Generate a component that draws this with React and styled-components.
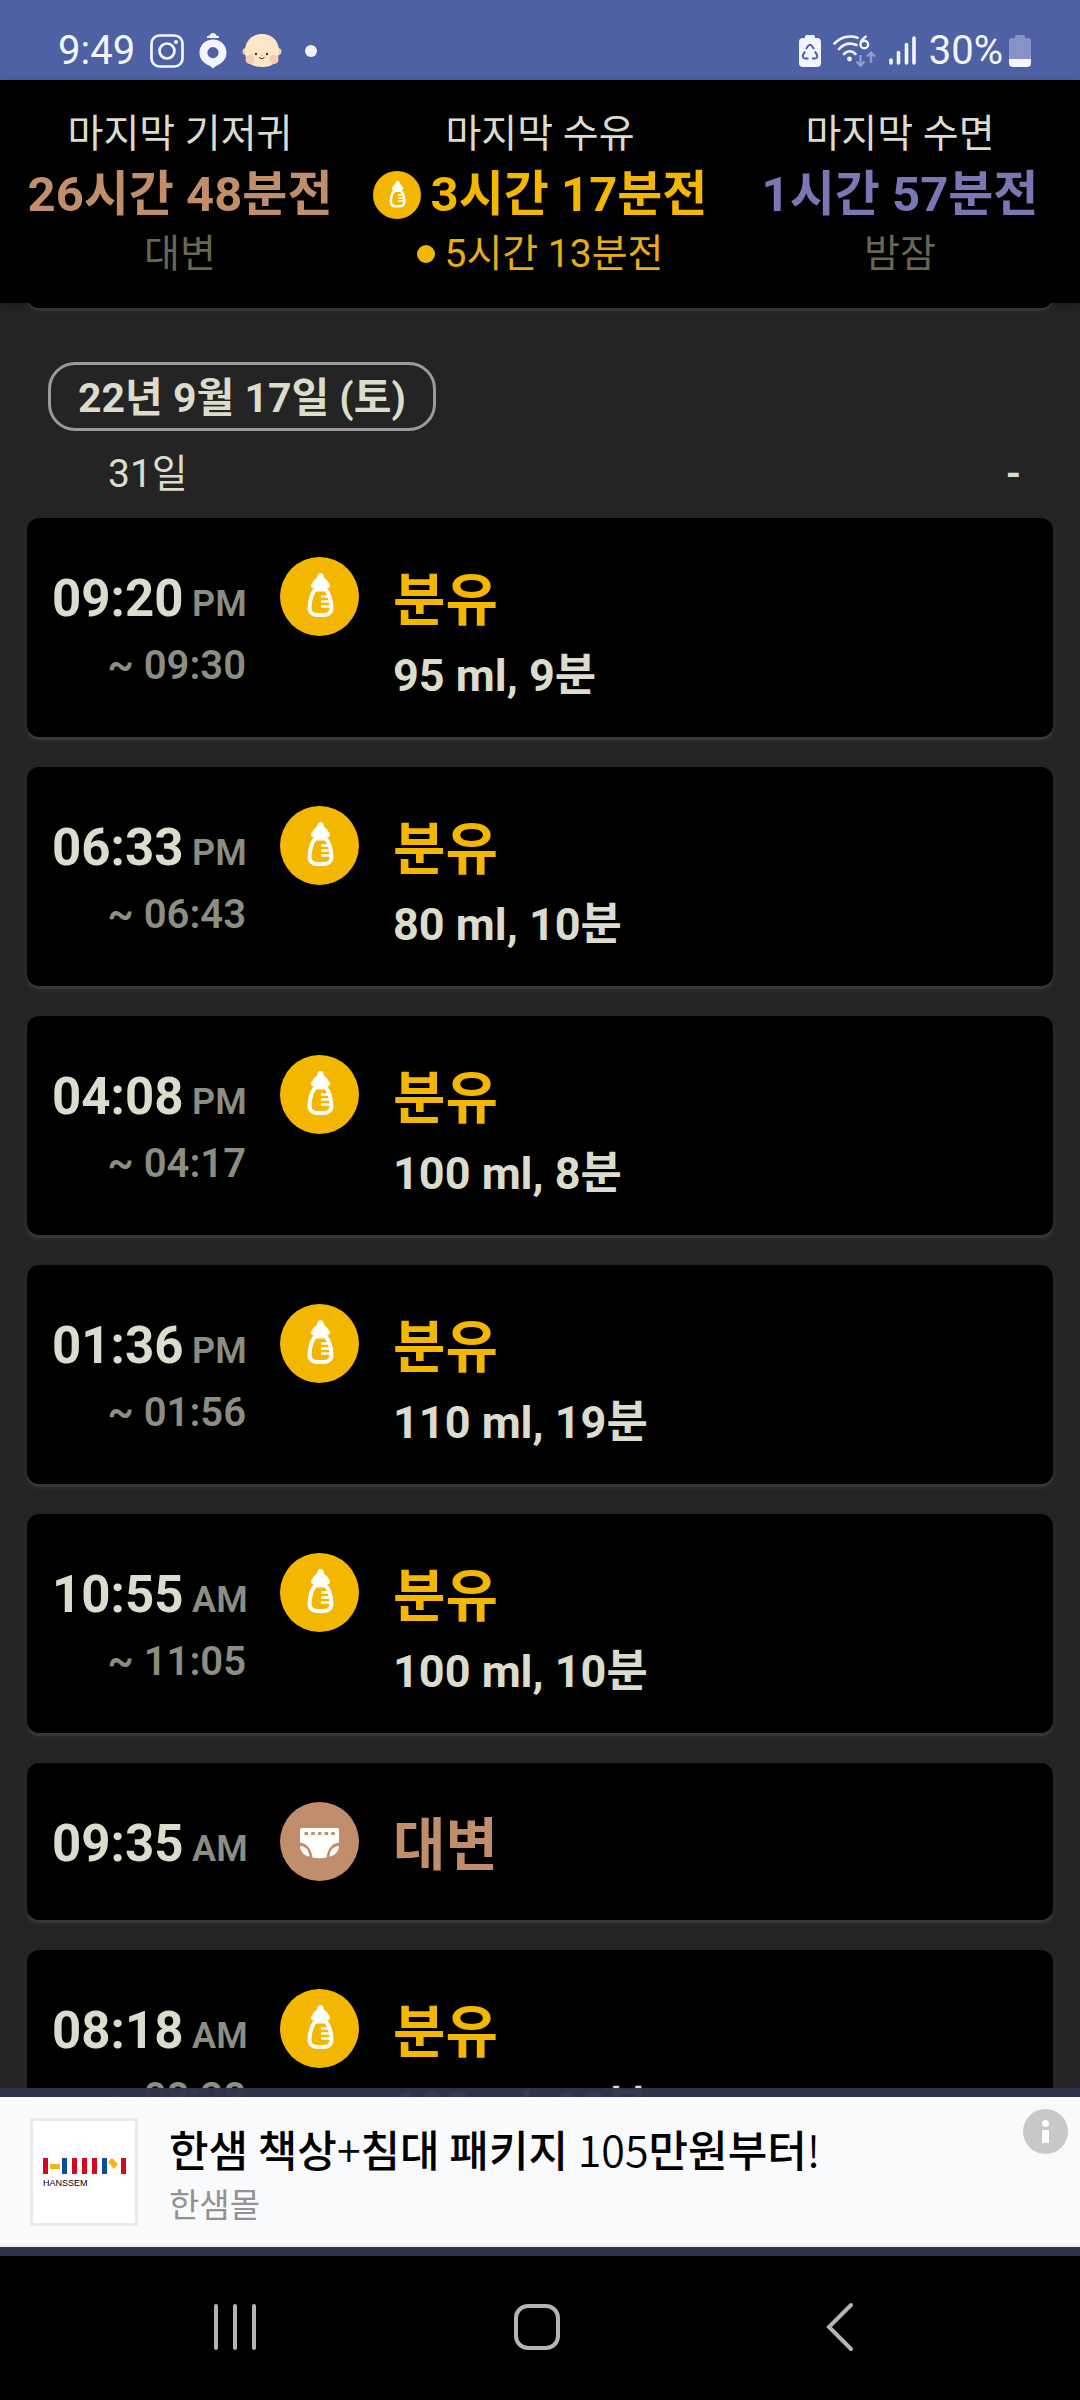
import React from "react";
import styled, { createGlobalStyle } from "styled-components";

const GOLD = "#f3b700";
const TAN = "#c08e6a";
const VIOLET = "#7a77b5";
const CREAM = "#dbdccc";
const MUTED = "#8b8e80";

const records = [
  { time: "09:20", period: "PM", end: "09:30", kind: "formula", detail: "95 ml, 9분" },
  { time: "06:33", period: "PM", end: "06:43", kind: "formula", detail: "80 ml, 10분" },
  { time: "04:08", period: "PM", end: "04:17", kind: "formula", detail: "100 ml, 8분" },
  { time: "01:36", period: "PM", end: "01:56", kind: "formula", detail: "110 ml, 19분" },
  { time: "10:55", period: "AM", end: "11:05", kind: "formula", detail: "100 ml, 10분" },
  { time: "09:35", period: "AM", kind: "stool" },
  { time: "08:18", period: "AM", end: "08:28", kind: "formula", detail: "100 ml, 10분" },
];

const kinds = {
  formula: { label: "분유", color: GOLD },
  stool: { label: "대변", color: TAN },
};

const BottleIcon = ({ size }) => (
  <svg width={size} height={size} viewBox="0 0 79 79" aria-hidden="true">
    <circle cx="39.5" cy="39.5" r="39.5" fill={GOLD} />
    <path
      d="M40.500 16c-2 0-3.200 1.300-3.200 3.200 0 2.300-4.800 4.200-4.800 6.800-2 .8-2.300 4.800.5 5.200h15c2.800-.4 2.500-4.400.5-5.200 0-2.600-4.800-4.500-4.800-6.800 0-1.900-1.200-3.200-3.200-3.200z"
      fill="#fff"
    />
    <path
      d="M35.500 32.500h10c3.500 3 6 11.500 6 18.500 0 4.500-3.500 7-8 7h-6c-4.500 0-8-2.500-8-7 0-7 2.500-15.500 6-18.500z"
      fill="none"
      stroke="#fff"
      strokeWidth="4"
      strokeLinejoin="round"
    />
    <path d="M41 39.500h8M41 44.500h9M41 49.500h9" stroke="#fff" strokeWidth="2.600" />
  </svg>
);

const DiaperIcon = ({ size }) => (
  <svg width={size} height={size} viewBox="0 0 79 79" aria-hidden="true">
    <circle cx="39.500" cy="39.500" r="39.500" fill={TAN} />
    <path
      d="M22 26h35q2 0 2 2v12.500c-6 .5-11 5-12.500 15q-7 1.500-14 0c-1.500-10-6.500-14.500-12.500-15V28q0-2 2-2z"
      fill="#fff"
    />
    <path d="M20 44c6 .5 9 4 9.500 10.500-5-.5-9-4.500-9.500-10.500zM59 44c-6 .5-9 4-9.500 10.500 5-.5 9-4.500 9.500-10.500z" fill="#fff" />
    <path d="M24.500 31.500h32" stroke={TAN} strokeWidth="3" strokeDasharray="3.500 3.200" />
  </svg>
);

const InstagramIcon = () => (
  <svg width="34" height="34" viewBox="0 0 34 34" fill="none" stroke="#f3f4fc" strokeWidth="2.700" aria-hidden="true">
    <rect x="1.500" y="1.500" width="31" height="31" rx="8" />
    <circle cx="17" cy="17" r="7.500" />
    <circle cx="26" cy="8" r="2" fill="#f3f4fc" stroke="none" />
  </svg>
);

const RingIcon = () => (
  <svg width="28" height="36" viewBox="0 0 28 36" fill="#f3f4fc" aria-hidden="true">
    <path d="M14 0c2 0 3 1 3.200 2.500 2-.3 3.300.8 2.800 2.500H8c-.5-1.700.8-2.800 2.800-2.500C11 1 12 0 14 0z" />
    <path
      fillRule="evenodd"
      d="M14 6.500c7.700 0 13.500 5.800 13.500 13 0 6-3.500 10-8.500 12.500-2 1-3.500 1.800-5 3.500-1.500-1.700-3-2.500-5-3.500C4 29.500.5 25.500.5 19.500c0-7.200 5.800-13 13.500-13zm0 7.500a5.600 5.600 0 100 11.200 5.600 5.600 0 000-11.200z"
    />
  </svg>
);

const BabyIcon = () => (
  <svg width="40" height="34" viewBox="0 0 40 34" aria-hidden="true">
    <circle cx="4" cy="17.500" r="3.500" fill="#f5cfa0" />
    <circle cx="36" cy="17.500" r="3.500" fill="#f5cfa0" />
    <path d="M20 0c10 0 17 7 17 17 0 10-5 16-17 16S3 27 3 17C3 7 10 0 20 0z" fill="#fee6c6" />
    <circle cx="8" cy="25.500" r="4.500" fill="#fbc9b4" />
    <circle cx="32" cy="25.500" r="4.500" fill="#fbc9b4" />
    <circle cx="14" cy="20" r="1.200" fill="#4a3728" />
    <circle cx="25" cy="20" r="1.200" fill="#4a3728" />
    <path d="M17 23.500q3 2.500 5.500 0" fill="none" stroke="#4a3728" />
    <path d="M19 21.500h1.500" stroke="#d9a87c" />
  </svg>
);

const BatterySaverIcon = () => (
  <svg width="22" height="32" viewBox="0 0 22 32" aria-hidden="true">
    <path d="M6 3V1.500Q6 0 7.500 0h7Q16 0 16 1.500V3h2q4 0 4 4v21q0 4-4 4H4q-4 0-4-4V7q0-4 4-4z" fill="#f3f4fc" />
    <g fill="none" stroke="#4e61a5" strokeWidth="2">
      <path d="M7 14l2-3q2-2.500 4 0l2 3" />
      <path d="M16 16.500l2 3.500q1 3-2 3.500h-3" />
      <path d="M9.500 23.500H6q-3-.5-2-3.500l2-3.500" />
    </g>
  </svg>
);

const WifiIcon = () => (
  <svg width="44" height="32" viewBox="0 0 44 32" fill="none" stroke="#f3f4fc" aria-hidden="true">
    <g strokeWidth="2.600" strokeLinecap="round">
      <path d="M1.500 8.500C8 1.500 17 .2 24.500 2.800" />
      <path d="M6 14c5-5.500 11.500-6.500 17.500-4" />
      <path d="M11 19c3.500-3.500 8-3.500 11.500 0" />
    </g>
    <circle cx="16.500" cy="24" r="2.400" fill="#f3f4fc" stroke="none" />
    <path d="M33.500 1C29 4 27.500 7 27.500 9.500a3.800 3.800 0 103.800-3.800q-2 0-3 1.500" strokeWidth="2.400" />
    <path d="M27.500 20v10.500M23.500 26.500l4 4 4-4M38 28V17.500M34 21.500l4-4 4 4" stroke="#919dc9" strokeWidth="2.400" />
  </svg>
);

const SignalIcon = () => (
  <svg width="28" height="32" viewBox="0 0 28 32" stroke="#f3f4fc" strokeWidth="3.600" strokeLinecap="round" aria-hidden="true">
    <path d="M2 25v3M9.500 17.500V28M17.500 9.500V28M25 3v25" />
  </svg>
);

const BatteryIcon = () => (
  <svg width="22" height="32" viewBox="0 0 22 32" aria-hidden="true">
    <path d="M6 3V1.500Q6 0 7.500 0h7Q16 0 16 1.500V3h3q3 0 3 3v18H0V6q0-3 3-3z" fill="#8793c4" />
    <path d="M0 24h22v4q0 4-4 4H4q-4 0-4-4z" fill="#f3f4fc" />
  </svg>
);

const HanssemLogo = () => (
  <svg width="84" height="16" viewBox="0 0 84 16" aria-hidden="true">
    <g fill="#d4081f">
      <path d="M0 0h5v16H0zM29 0h5v16h-5zM39 0h5v16h-5zM49 0h5v16h-5zM78 0h5v16h-5z" />
    </g>
    <path d="M19 0h5v16h-5zM59 0h5v16h-5z" fill="#0b4f9c" />
    <path d="M7 6h10v5H7zM65 4l4-4 6 6-4 5z" fill="#f4b316" />
  </svg>
);

const App = () => (
  <>
    <GlobalStyle />
    <Screen>
      <StatusBar>
        <StatusGroup $gap={15}>
          <StatusText>9:49</StatusText>
          <InstagramIcon />
          <RingIcon />
          <BabyIcon />
          <NoticeDot />
        </StatusGroup>
        <StatusGroup $gap={12}>
          <BatterySaverIcon />
          <WifiIcon />
          <SignalIcon />
          <BatteryLevel>
            <StatusText>30%</StatusText>
            <BatteryIcon />
          </BatteryLevel>
        </StatusGroup>
      </StatusBar>

      <Summary>
        <SummaryItem>
          <SummaryLabel>마지막 기저귀</SummaryLabel>
          <SummaryValue $color={TAN}>26시간 48분전</SummaryValue>
          <SummaryNote>대변</SummaryNote>
        </SummaryItem>
        <SummaryItem>
          <SummaryLabel>마지막 수유</SummaryLabel>
          <SummaryValue $color={GOLD}>
            <BottleIcon size={48} />
            3시간 17분전
          </SummaryValue>
          <SummaryNote $color="#e6ae12">
            <Dot />
            5시간 13분전
          </SummaryNote>
        </SummaryItem>
        <SummaryItem>
          <SummaryLabel>마지막 수면</SummaryLabel>
          <SummaryValue $color={VIOLET}>1시간 57분전</SummaryValue>
          <SummaryNote>밤잠</SummaryNote>
        </SummaryItem>
      </Summary>

      <Timeline>
        <ScrolledCard />
        <DayHeader>
          <DayBadge>22년 9월 17일 (토)</DayBadge>
          <DayInfo>
            <span>31일</span>
            <strong>-</strong>
          </DayInfo>
        </DayHeader>
        <RecordList>
          {records.map((record) => {
            const kind = kinds[record.kind];
            return (
              <Card key={record.time}>
                <TimeColumn>
                  <StartTime>
                    {record.time} <small>{record.period}</small>
                  </StartTime>
                  {record.end && <EndTime>~ {record.end}</EndTime>}
                </TimeColumn>
                {record.kind === "stool" ? <DiaperIcon size={79} /> : <BottleIcon size={79} />}
                <Description>
                  <Kind $color={kind.color}>{kind.label}</Kind>
                  {record.detail && <Detail>{record.detail}</Detail>}
                </Description>
              </Card>
            );
          })}
        </RecordList>
      </Timeline>

      <AdFrame>
        <AdBanner>
          <AdLink href="#hanssem">
            <AdThumb>
              <HanssemLogo />
              <span>HANSSEM</span>
            </AdThumb>
            <AdCopy>
              <AdTitle>
                한샘 책상<i>+</i>침대 패키지 <i>105</i>만원부터<i>!</i>
              </AdTitle>
              <AdSource>한샘몰</AdSource>
            </AdCopy>
          </AdLink>
          <InfoButton aria-label="광고 정보">
            <svg width="45" height="45" viewBox="0 0 45 45">
              <circle cx="22.500" cy="22.500" r="22.500" fill="#c7c8ca" />
              <circle cx="22.500" cy="14.500" r="3.500" fill="#fff" />
              <path d="M19 21h7v13h-7z" fill="#fff" />
            </svg>
          </InfoButton>
        </AdBanner>
      </AdFrame>

      <NavBar>
        <NavButton aria-label="최근 앱">
          <svg width="48" height="50" viewBox="0 0 48 50">
            <path d="M5 4v42M24 4v42M43 4v42" />
          </svg>
        </NavButton>
        <NavButton aria-label="홈">
          <svg width="48" height="50" viewBox="0 0 48 50">
            <rect x="3" y="4" width="42" height="42" rx="12" />
          </svg>
        </NavButton>
        <NavButton aria-label="뒤로">
          <svg width="48" height="50" viewBox="0 0 48 50">
            <path d="M35 3L13 25l22 22" />
          </svg>
        </NavButton>
      </NavBar>
    </Screen>
  </>
);

// Styled Components
const GlobalStyle = createGlobalStyle`
  * {
    box-sizing: border-box;
  }

  body {
    margin: 0;
    background: #242424;
    font-family: Roboto, "Noto Sans CJK KR", sans-serif;
    color: ${CREAM};
  }

  svg {
    display: block;
    flex-shrink: 0;
  }
`;

const Screen = styled.div`
  display: flex;
  flex-direction: column;
  height: 100vh;
  overflow: hidden;
`;

const StatusBar = styled.div`
  display: flex;
  flex-shrink: 0;
  justify-content: space-between;
  align-items: center;
  height: 80px;
  padding: 21px 49px 0 58px;
  background: #4e61a5;
`;

const StatusGroup = styled.div`
  display: flex;
  align-items: center;
  gap: ${({ $gap }) => $gap}px;
`;

const StatusText = styled.span`
  font-size: 40px;
  line-height: 44px;
  color: #f3f4fc;
`;

const BatteryLevel = styled.div`
  display: flex;
  align-items: center;
  gap: 6px;
`;

const NoticeDot = styled.span`
  width: 12px;
  height: 12px;
  margin-left: 8px;
  border-radius: 50%;
  background: #f3f4fc;
`;

const Summary = styled.header`
  position: relative;
  z-index: 1;
  display: grid;
  flex-shrink: 0;
  grid-template-columns: repeat(3, 1fr);
  padding: 23px 0 20px;
  background: #000;
  box-shadow: 0 2px 8px rgba(0, 0, 0, 0.3);
`;

const SummaryItem = styled.div`
  display: flex;
  flex-direction: column;
  align-items: center;
  white-space: nowrap;
`;

const SummaryLabel = styled.div`
  font-size: 39px;
  line-height: 62px;
`;

const SummaryValue = styled.div`
  display: flex;
  align-items: center;
  gap: 10px;
  font-size: 49px;
  font-weight: 700;
  line-height: 60px;
  color: ${({ $color }) => $color};
`;

const SummaryNote = styled.div`
  display: flex;
  align-items: center;
  gap: 10px;
  font-size: 39px;
  line-height: 58px;
  color: ${({ $color }) => $color || "#686752"};
`;

const Dot = styled.span`
  width: 18px;
  height: 18px;
  border-radius: 50%;
  background: ${GOLD};
`;

const Timeline = styled.main`
  flex: 1;
  min-height: 0;
  margin-top: -40px;
  padding: 0 27px;
  overflow: hidden;
`;

const Surface = styled.div`
  border-radius: 12px;
  background: #000;
  box-shadow: 0 3px 0 #373737, 0 3px 0 3px #282828;
`;

const ScrolledCard = styled(Surface)`
  height: 45px;
`;

const DayHeader = styled.section`
  display: flex;
  flex-direction: column;
  align-items: flex-start;
  padding: 54px 21px 15px;
`;

const DayBadge = styled.h2`
  margin: 0;
  padding: 3px 27px 0;
  border: 3px solid #9b9b9d;
  border-radius: 27px;
  font-size: 41px;
  font-weight: 700;
  line-height: 60px;
`;

const DayInfo = styled.div`
  display: flex;
  align-self: stretch;
  justify-content: space-between;
  padding: 14px 11px 0 60px;
  font-size: 39px;
  line-height: 58px;
`;

const RecordList = styled.ul`
  display: flex;
  flex-direction: column;
  gap: 30px;
  margin: 0;
  padding: 0;
  list-style: none;
`;

const Card = styled(Surface).attrs({ as: "li" })`
  display: flex;
  align-items: flex-start;
  min-height: 157px;
  padding: 39px 25px 30px;
`;

const TimeColumn = styled.div`
  width: 194px;
  margin-right: 34px;
  padding-top: 5px;
  font-weight: 700;
  text-align: right;
  white-space: nowrap;
`;

const StartTime = styled.div`
  font-size: 51px;
  line-height: 74px;

  small {
    margin-left: -4px;
    font-size: 36px;
    font-weight: 600;
    color: ${MUTED};
  }
`;

const EndTime = styled.div`
  font-size: 40px;
  font-weight: 600;
  line-height: 50px;
  color: ${MUTED};
`;

const Description = styled.div`
  padding: 8px 0 0 34px;
`;

const Kind = styled.div`
  font-size: 57px;
  font-weight: 700;
  line-height: 71px;
  color: ${({ $color }) => $color};
`;

const Detail = styled.div`
  padding-top: 9px;
  font-size: 45px;
  font-weight: 700;
  line-height: 62px;
`;

const AdFrame = styled.aside`
  position: relative;
  flex-shrink: 0;
  margin-top: -9px;
  padding: 9px 0;
  background: rgba(46, 54, 74, 0.97);
`;

const AdBanner = styled.div`
  display: flex;
  align-items: flex-start;
  justify-content: space-between;
  height: 150px;
  padding: 12px 12px 0 30px;
  border-bottom: 3px solid #eeeff1;
  background: #f9fafc;
`;

const AdLink = styled.a`
  display: flex;
  gap: 31px;
  padding-top: 9px;
  color: #000;
  text-decoration: none;
`;

const AdThumb = styled.div`
  width: 108px;
  height: 108px;
  padding: 37px 0 0 10px;
  border: 3px solid #ebebeb;
  background: #fff;

  span {
    display: block;
    font-family: "Liberation Sans", sans-serif;
    font-size: 9px;
    line-height: 18px;
  }
`;

const AdCopy = styled.div`
  font-family: "Noto Sans CJK KR", sans-serif;
`;

const AdTitle = styled.div`
  font-size: 43px;
  font-weight: 500;
  line-height: 60px;

  i {
    font-style: normal;
    font-weight: 350;
  }
`;

const AdSource = styled.div`
  font-size: 33px;
  line-height: 50px;
  color: #929292;
`;

const InfoButton = styled.button`
  padding: 0;
  border: 0;
  background: none;
`;

const NavBar = styled.nav`
  display: grid;
  flex-shrink: 0;
  grid-template-columns: repeat(3, 1fr);
  height: 144px;
  padding: 0 89px 2px 84px;
  background: #000;
`;

const NavButton = styled.button`
  display: flex;
  align-items: center;
  justify-content: center;
  padding: 0;
  border: 0;
  background: none;

  svg {
    fill: none;
    stroke: #b4b4b4;
    stroke-width: 4px;
    stroke-linecap: round;
  }
`;

export default App;
